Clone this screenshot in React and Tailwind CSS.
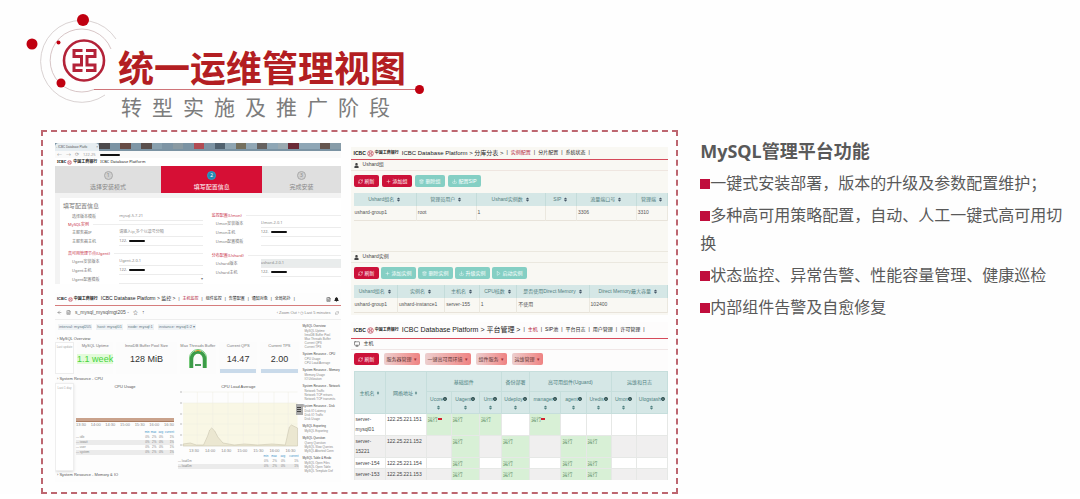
import React from "react";
import {
  LuRefreshCw,
  LuPlus,
  LuTrash2,
  LuDownload,
  LuPlay,
  LuArrowLeft,
  LuFileText,
  LuMonitor,
} from "react-icons/lu";
import { FaUser, FaSort, FaInfoCircle, FaBell } from "react-icons/fa";

const cjk = "font-['Noto_Sans','Noto_Sans_CJK_SC',sans-serif]";
const narrow = "font-['Liberation_Sans','Noto_Sans_CJK_SC',sans-serif]";

function BankMark({ className }) {
  return (
    <svg viewBox="0 0 150 150" className={className} fill="none" stroke="currentColor" aria-hidden="true">
      <circle cx="75" cy="75" r="61" strokeWidth="12" />
      <path strokeWidth="10" d="M70 42H42V61H66V87H42V106H70M80 42H108V61H84V87H108V106H80" />
    </svg>
  );
}

function Orbit() {
  return (
    <svg viewBox="0 0 118 118" className="h-[118px] w-[118px] shrink-0 text-[#b32238]" fill="none" aria-hidden="true">
      <path d="M116 39A41 41 0 1 0 105 95" stroke="#cfc6c6" strokeWidth=".8" />
      <path d="M111 49A31.500 31.500 0 1 0 94 89.500" stroke="#cdb6b8" strokeWidth=".8" />
      <path d="M94 89.500H118" stroke="#cf7479" />
      <g fill="#c00010">
        <circle cx="83" cy="20" r="6" />
        <circle cx="32" cy="44" r="5.500" />
        <circle cx="58.500" cy="42.500" r="2" />
        <circle cx="61" cy="83" r="4.500" />
      </g>
      <g stroke="currentColor">
        <circle cx="84" cy="60.500" r="20" strokeWidth="2.600" />
        <path
          strokeWidth="3"
          d="M82.500 50.500H74V56.500H81.500V65H74V70.500H82.500M86 50.500H95V56.500H87V65H95V70.500H86"
        />
      </g>
    </svg>
  );
}

function Brand({ small, titleClass, crumb, links }) {
  return (
    <div className="flex items-center gap-[3px] whitespace-nowrap text-[#222]">
      <div className="flex shrink-0 items-center gap-px text-[4px] leading-[8px] font-bold">
        <span className={small ? "text-[4px]" : "text-[5px]"}>ICBC</span>
        <BankMark className={`${small ? "size-[5px]" : "size-[7px]"} text-[#b32238]`} />
        <span>中国工商银行</span>
      </div>
      <span className={titleClass}>ICBC Database Platform{crumb ? ` > ${crumb} >` : ""}</span>
      {links && (
        <nav className={`flex gap-[3px] ${small ? "text-[4px]" : "text-[5px]"}`}>
          <span>|</span>
          {links.map((l, i) => (
            <React.Fragment key={l}>
              <a href="#" className={i === 0 ? "text-[#b32238]" : ""}>{l}</a>
              <span>|</span>
            </React.Fragment>
          ))}
        </nav>
      )}
    </div>
  );
}

function Field({ label, value, bar, grey, select }) {
  return (
    <label className="flex h-[9px] items-center text-[4px] text-[#777]">
      <span className="w-[38%] shrink-0 pl-1">{label}</span>
      <span className={`flex h-[9px] min-w-0 flex-1 items-center border-b border-[#ececec] ${grey ? "bg-[#e9ecec]" : ""}`}>
        {select ? (
          <>
            <select className="w-full appearance-none text-[4px]" defaultValue=""><option value="" /></select>
            <span>▾</span>
          </>
        ) : (
          <input className={bar ? "w-[10px] text-[4px]" : "w-full min-w-0 text-[4px] text-[#888]"} defaultValue={value} />
        )}
        {bar && <span className="h-[2px] w-4 shrink-0 rounded-full bg-[#111]" />}
      </span>
    </label>
  );
}

function Legend({ children }) {
  return (
    <div className="flex h-[7px] items-center gap-1 text-[4px] text-[#c8324a]">
      {children}
      <span className="h-px flex-1 bg-[#eeeeee]" />
    </div>
  );
}

function Step({ n, label, active }) {
  return (
    <li className={`relative flex flex-col items-center gap-[3px] pt-[5px] text-[6px] leading-[8px] ${active ? "bg-[#d60f35] text-white" : "bg-[#dfdfdf] text-[#888]"}`}>
      <span className={`flex size-[9px] items-center justify-center rounded-full border text-[5px] leading-none ${active ? "border-[#2b9fc4] bg-[#2389b0]" : "border-[#aaa] bg-[#d0d0d0]"}`}>{n}</span>
      {label}
      {active && <span className="absolute top-[10px] -right-[5px] border-y-[5px] border-l-[5px] border-y-transparent border-l-[#d60f35]" />}
    </li>
  );
}

const patches = ["bg-[#4d4a4c]", "bg-[#7b93a3]", "bg-[#674c46]", "bg-[#7e96a6]", "bg-[#5a4f4c]", "bg-[#88a0ae]", "bg-[#7d94a4]", "bg-[#8a9aa2]", "bg-[#7b93a3]", "bg-[#b14b53]", "bg-[#7d94a4]", "bg-[#51626f]", "bg-[#8fa5b2]", "bg-[#75705e]", "bg-[#91a7b5]", "bg-[#65615f]", "bg-[#8ea6b5]", "bg-[#9aa9b0]", "bg-[#6a2a36]", "bg-[#8ea6b5]", "bg-[#8ea6b5]", "bg-[#65564f]", "bg-[#879ca8]"];

function InstallPanel() {
  return (
    <section className={`h-[141px] overflow-hidden bg-[#f3f3f3] ${cjk}`}>
      <div className="flex h-2 bg-[#7b93a3]">
        <span className="flex w-11 shrink-0 items-center justify-between rounded-t-sm bg-[#e6edf1] px-px font-['Liberation_Sans'] text-[3px] leading-[8px] whitespace-nowrap text-[#555]">
          <span>▫ ICBC Database Platfo</span><span>×</span>
        </span>
        {patches.map((c, i) => (
          <span key={i} className={`h-[6px] flex-1 ${c}`} />
        ))}
      </div>
      <div className="flex h-[7px] items-center gap-1 bg-[#fafafa] px-[2px] text-[5px] leading-[7px] text-[#999]">
        <span>←</span><span>→</span><span>⟳</span><span className="text-[4px]">122.25</span>
        <span className="h-[2px] w-5 rounded-full bg-[#111]" />
      </div>
      <div className="h-2 bg-white px-[2px]"><Brand small titleClass="text-[4px] leading-[8px]" /></div>
      <ol className="grid h-[27px] grid-cols-[106fr_101fr_78fr]">
        <Step n="1" label="选择安装模式" />
        <Step n="2" label="填写配置信息" active />
        <Step n="3" label="完成安装" />
      </ol>
      <div className="mt-[5px] ml-[5px] h-full bg-white pt-1 pl-[3px]">
        <h3 className="text-[6px] leading-[8px] text-[#777]">填写配置信息</h3>
        <div className="grid grid-cols-[139fr_128fr] gap-x-[9px] pt-[2px]">
          <div className="pl-[5px]">
            <Field label="选择版本模板" value="mysql-5.7.21" />
            <Legend>MySQL实例</Legend>
            <Field label="主服务器IP" value="请输入ip,多个以逗号分隔" />
            <Field label="主服务器主机" value="122." bar />
            <div className="mt-1"><Legend>高可用管理节点(Ugent)</Legend></div>
            <Field label="Ugent安装版本" value="Ugent-2.0.1" />
            <Field label="Ugent主机" value="122." bar />
            <Field label="Ugent配置模板" select />
          </div>
          <div>
            <Legend>监控配置(Umon)</Legend>
            <Field label="Umon安装版本" value="Umon-2.0.1" />
            <Field label="Umon主机" value="122." bar />
            <Field label="Umon配置模板" value="" />
            <div className="mt-[6px]"><Legend>分布配置(Ushard)</Legend></div>
            <Field label="Ushard版本" value="ushard-2.0.1" grey />
            <Field label="Ushard主机" value="122." bar />
            <Field label="" value="" />
          </div>
        </div>
      </div>
    </section>
  );
}

const sidebar = [
  ["MySQL Overview", "MySQL Uptime", "InnoDB Buffer Pool", "Max Threads Buffer", "Current QPS", "Current TPS"],
  ["System Resource - CPU", "CPU Usage", "CPU Load Average"],
  ["System Resource - Memory", "Memory Usage", "IO Utilization"],
  ["System Resource - Network", "Network Traffic", "Network TCP retrans", "Network TCP transmits"],
  ["System Resource - Disk", "Disk IO Latency", "Disk IO Traffic", "Disk Usage"],
  ["MySQL Exporting", "MySQL Exporting"],
  ["MySQL Question", "Query Question", "MySQL Slow Queries", "MySQL Aborted Conn"],
  ["MySQL Table & Redo", "MySQL Open Files", "MySQL Open Table", "MySQL Template Def"],
];

function Stat({ title, value, green, spark, grow }) {
  return (
    <div className={`flex min-w-0 flex-col items-center bg-[#fcfcfc] whitespace-nowrap ${grow}`}>
      <span className="text-[4px] leading-[7px] text-[#777]">{title}</span>
      <span className={`my-[5px] text-[9px] leading-[10px] ${green ? "bg-[#e2fbd9] text-[8px] text-[#46d43c]" : "text-[#333]"}`}>{value}</span>
      {spark && <span className="mb-px h-[5px] w-[95%] bg-[#c9daea]" />}
    </div>
  );
}

function MiniRows({ rows }) {
  return (
    <table className="w-full table-fixed text-right text-[3px] leading-[5px] whitespace-nowrap text-[#888]">
      <thead>
        <tr className="text-[#3a92c8]">
          <th className="w-[68%]" /><th className="font-normal">min</th><th className="font-normal">max</th><th className="font-normal">avg</th><th className="w-[11%] font-normal">current</th>
        </tr>
      </thead>
      <tbody>
        {rows.map((r, i) => (
          <tr key={r} className={i % 2 ? "bg-[#ebebeb]" : ""}>
            <td className="text-left">— {r}</td><td>0%</td><td>2%</td><td>0%</td><td>1%</td>
          </tr>
        ))}
      </tbody>
    </table>
  );
}

const times = ["13:30", "14:00", "14:30", "15:00", "15:30", "16:00", "16:30"];

function MonitorPanel() {
  return (
    <section className={`h-[189px] overflow-hidden bg-[#fdfdfd] text-[#555] ${narrow}`}>
      <div className="flex h-[13px] items-center justify-between border-b border-[#d67d7d] px-[2px]">
        <Brand small titleClass="text-[5px]" crumb="监控" links={["主机监控", "组件监控", "告警配置", "通知对象", "全局拓扑"]} />
        <span className="flex gap-[3px] text-[5px] text-[#222]"><LuFileText /><FaBell /></span>
      </div>
      <div className="flex h-[14px] items-center justify-between border-b border-[#eeeeee] px-[2px] text-[5px]">
        <span className="flex items-center gap-1"><LuArrowLeft /><LuFileText />s_mysql_mysqlmgt205 -<span>☆</span><span>↑</span></span>
        <span className="flex items-center gap-1 text-[4px] text-[#888]">‹ Zoom Out › ◷ Last 5 minutes <LuRefreshCw /></span>
      </div>
      <div className="flex">
        <div className="min-w-0 flex-1">
          <div className="flex gap-1 px-[3px] pt-1 text-[4px] leading-[6px]">
            {["interval:  mysql205", "host:  mysql01", "node:  mysql:1", "instance:  mysql1:2 ▾"].map((t) => (
              <button key={t} type="button" className="bg-[#eef2f5] px-px text-[#677a88]">{t}</button>
            ))}
          </div>
          <div className="pt-[6px] pl-[2px] text-[4px] leading-[6px]">› MySQL Overview</div>
          <div className="flex h-8 gap-[3px]">
            <div className="w-[19px] shrink-0 border border-[#eeeeee] bg-white text-center text-[3px] leading-[8px] whitespace-nowrap text-[#aaa]">Last update</div>
            <Stat title="MySQL Uptime" value="1.1 week" green grow="flex-[36]" />
            <Stat title="InnoDB Buffer Pool Size" value="128 MiB" grow="flex-[60]" />
            <div className="flex flex-[36] flex-col items-center bg-[#fcfcfc] text-[4px] leading-[7px] whitespace-nowrap text-[#777]">
              Max Threads Buffer
              <svg viewBox="0 0 18 20" className="h-5 w-[18px]" fill="none" aria-hidden="true">
                <path d="M2.500 19V10A6.500 7 0 0 1 15.500 10V19" stroke="#3c9c48" strokeWidth="3.500" />
                <path d="M.5 19V9A8.500 8.500 0 0 1 17.500 9V19" stroke="#74c878" strokeWidth="1" />
                <path d="M6 2.500Q9 0 12 2.500" stroke="#e59b35" />
                <path d="M6 16H12" stroke="#4d9d5c" strokeWidth="2" />
              </svg>
            </div>
            <Stat title="Current QPS" value="14.47" spark grow="flex-[38]" />
            <Stat title="Current TPS" value="2.00" spark grow="flex-[38]" />
          </div>
          <div className="py-px pl-[2px] text-[4px] leading-[7px]">› System Resource - CPU</div>
          <div className="flex gap-[2px]">
            <div className="h-[88px] w-[19px] shrink-0 border border-[#eeeeee] bg-white text-center text-[3px] leading-[8px] whitespace-nowrap text-[#aaa] shadow-sm">Last 1 day</div>
            <div className="w-[98px] shrink-0 text-[4px]">
              <div className="h-[35px] text-center leading-[8px]">CPU Usage</div>
              <div className="h-1 border-b border-[#a97b60] bg-[#c9a28c]" />
              <div className="flex justify-between pb-[2px] leading-[6px] text-[#888]">
                {times.map((t) => <span key={t}>{t}</span>)}
              </div>
              <MiniRows rows={["idle", "iowait", "user", "system"]} />
            </div>
            <div className="ml-[2px] min-w-0 flex-1 text-[4px]">
              <div className="text-center leading-[8px]">CPU Load Average</div>
              <svg viewBox="0 0 118 57" preserveAspectRatio="none" className="h-[57px] w-full" aria-hidden="true">
                <rect x="5" y="12" width="112" height="43" fill="#f9f7e5" />
                <path d="M5 1H117M5 12H117M5 23H117M5 33H117M5 44H117M19 1V55M34 1V55M49 1V55M64 1V55M79 1V55M94 1V55M108 1V55" stroke="#f2f0e6" strokeWidth=".5" />
                <path d="M5 53L12 52L18 54H25L29 45L31 39L33 37L36 40L39 46L44 52L55 54L65 53L78 54L92 53L105 54L109 36L111 34L117 37V55H5Z" fill="#ebe7d1" stroke="#cbc7b2" strokeWidth=".6" />
                <path d="M2 1H4M2 12H4M2 23H4M2 33H4M2 44H4M2 54H4" stroke="#bbb" />
              </svg>
              <div className="flex justify-around pl-2 leading-[6px] text-[#888]">
                {times.map((t) => <span key={t}>{t}</span>)}
              </div>
              <MiniRows rows={["load1m", "load5m"]} />
            </div>
          </div>
          <div className="pt-px pl-[2px] text-[4px] leading-[6px]">› System Resource - Memory &amp; IO</div>
        </div>
        <aside className="relative w-[42px] shrink-0 pt-1 pl-1 text-[3px] leading-[4px] whitespace-nowrap">
          {sidebar.map(([head, ...items]) => (
            <div key={head} className="mb-[3px]">
              <div className="leading-[5px] text-[#444]">{head}</div>
              {items.map((t, i) => <div key={i} className="pl-[2px] text-[#888]">{t}</div>)}
            </div>
          ))}
          <span className="absolute top-[84px] left-[-3px] flex h-[11px] w-[7px] flex-col items-center justify-center gap-px bg-[#aaa]">
            <i className="h-px w-1 bg-[#444]" /><i className="h-px w-1 bg-[#444]" /><i className="h-px w-1 bg-[#444]" />
          </span>
        </aside>
      </div>
    </section>
  );
}

const tones = {
  red: "bg-[#cc1239] text-white",
  teal: "bg-[#85cfc4] text-white",
  pink: "bg-linear-to-r from-[#eccfcf] to-[#ee8282] text-[#5b3434]",
};

function Action({ tone, icon: Icon, label }) {
  return (
    <button type="button" className={`flex h-3 items-center gap-[2px] rounded-xs text-[5px] leading-none whitespace-nowrap ${tone === "pink" ? "px-[3px]" : "px-1"} ${tones[tone]}`}>
      {Icon && <Icon className="size-[5px]" />}
      {label}
      {tone === "pink" && <span className="text-[#9c2c35]">▾</span>}
    </button>
  );
}

function Grid({ widths, head, row }) {
  return (
    <table className="w-full table-fixed border-b border-[#e8e3da] text-[5px] text-[#555]">
      <colgroup>{widths.map((w, i) => <col key={i} style={{ width: `${w}%` }} />)}</colgroup>
      <thead className="bg-[#d5e7e6] text-[#547f7f]">
        <tr>
          {head.map((h) => (
            <th key={h} className="h-[13px] border-r border-[#c4dcda] p-0 text-[5px] leading-none font-normal whitespace-nowrap">
              <span className="inline-flex items-center gap-[2px]">{h}<FaSort className="size-[5px] text-[#456]" /></span>
            </th>
          ))}
        </tr>
      </thead>
      <tbody>
        <tr>
          {row.map((c, i) => (
            <td key={i} className="h-[14px] border-r border-[#ebe8df] px-px py-0 leading-none whitespace-nowrap">{c}</td>
          ))}
        </tr>
      </tbody>
    </table>
  );
}

function ShardPanel() {
  return (
    <section className={`h-[168px] overflow-hidden bg-[#f9f8f3] ${narrow}`}>
      <div className="flex h-[13px] items-center border-b border-[#d54a5a] px-[3px]">
        <Brand titleClass="text-[6px]" crumb="分库分表" links={["实例配置", "分片配置", "系统状态"]} />
      </div>
      <div className="flex h-[11px] items-center gap-1 border-b border-[#efe6e0] px-[3px] text-[5px] text-[#444]"><FaUser />Ushard组</div>
      <div className="flex gap-[3px] px-[3px] py-1">
        <Action tone="red" icon={LuRefreshCw} label="刷新" />
        <Action tone="red" icon={LuPlus} label="添加组" />
        <Action tone="teal" icon={LuTrash2} label="删除组" />
        <Action tone="teal" icon={LuDownload} label="配置SIP" />
      </div>
      <div className="h-[60px] pt-[2px] pl-[3px]">
        <Grid
          widths={[20, 19, 22, 10, 19, 10]}
          head={["Ushard组名", "管理员用户", "Ushard实例数", "SIP", "流量端口号", "管理端"]}
          row={["ushard-group1", "root", "1", "", "3306", "3310"]}
        />
      </div>
      <div className="flex h-3 items-center gap-1 border-y border-[#ebe8df] px-[3px] text-[5px] text-[#444]"><FaUser />Ushard实例</div>
      <div className="flex gap-[2px] px-[3px] py-1">
        <Action tone="red" icon={LuRefreshCw} label="刷新" />
        <Action tone="teal" icon={LuPlus} label="添加实例" />
        <Action tone="teal" icon={LuTrash2} label="删除实例" />
        <Action tone="teal" icon={LuDownload} label="升级实例" />
        <Action tone="teal" icon={LuPlay} label="启动实例" />
      </div>
      <div className="pt-[2px] pl-[3px]">
        <Grid
          widths={[14, 15, 11, 12, 23, 25]}
          head={["Ushard组名", "实例名", "主机名", "CPU核数", "是否使用Direct Memory", "Direct Memory最大容量"]}
          row={["ushard-group1", "ushard-instance1", "server-155", "1", "不使用", "102400"]}
        />
      </div>
    </section>
  );
}

const cols = ["Ucore", "Uagent", "Urm", "Udeploy", "manager", "agent", "Uredis", "Umon", "Ulogstash"];
const hosts = [
  { name: "server-mysql01", ip: "122.25.221.151", on: [0, 1, 2, 4], flag: [0, 4], h: "h-[22px]" },
  { name: "server-15221", ip: "122.25.221.152", on: [1, 3, 5, 6], h: "h-[22px]" },
  { name: "server-154", ip: "122.25.221.154", on: [1, 3, 5, 6], h: "h-[11px]" },
  { name: "server-153", ip: "122.25.221.153", on: [1, 3, 5, 6], h: "h-[12px]" },
];
const hostWidths = [10, 13, 8, 9, 7, 9, 10, 8, 8, 8, 10];

function HostPanel() {
  const th = "border border-[#c6dedc] p-0 text-center font-normal whitespace-nowrap";
  const td = "border border-[#e6e8e6] px-px py-0 align-top leading-[10px]";
  return (
    <section className={`h-[158px] overflow-hidden bg-[#fdfcfc] ${narrow}`}>
      <div className="flex h-[17px] items-center border-b border-[#d54a5a] px-[3px]">
        <Brand titleClass="text-[7px]" crumb="平台管理" links={["主机", "SIP池", "平台日志", "用户管理", "许可管理"]} />
      </div>
      <div className="flex h-[11px] items-center gap-1 border-b border-[#f0e6e6] px-[3px] text-[5px] text-[#333]"><LuMonitor className="size-[6px]" />主机</div>
      <div className="flex gap-[5px] px-[3px] pt-[3px] pb-[5px]">
        <Action tone="red" icon={LuRefreshCw} label="刷新" />
        <Action tone="pink" label="服务器管理" />
        <Action tone="pink" label="一键高可用环境" />
        <Action tone="pink" label="组件服务" />
        <Action tone="pink" label="运维管理" />
      </div>
      <div className="pt-px pl-[3px]">
        <table className="w-full table-fixed border-collapse text-[5px] leading-[6px] text-[#444]">
          <colgroup>{hostWidths.map((w, i) => <col key={i} style={{ width: `${w}%` }} />)}</colgroup>
          <thead className="bg-[#d5e7e6] text-[#4d7f7f]">
            <tr className="h-[20px]">
              <th rowSpan="2" className={th}>主机名 <FaSort className="inline size-[4px]" /></th>
              <th rowSpan="2" className={th}>网络地址 <FaSort className="inline size-[4px]" /></th>
              <th colSpan="3" className={th}>基础组件</th>
              <th className={th}>备份部署</th>
              <th colSpan="3" className={th}>高可用组件(Uguard)</th>
              <th colSpan="2" className={th}>运维和日志</th>
            </tr>
            <tr className="h-[22px]">
              {cols.map((c) => (
                <th key={c} className={th}>
                  <span className="flex items-center justify-center">{c}<FaInfoCircle className="size-[4px] shrink-0 text-[#244]" /></span>
                  <FaSort className="mx-auto mt-[3px] size-[5px]" />
                </th>
              ))}
            </tr>
          </thead>
          <tbody>
            {hosts.map((r, i) => (
              <tr key={r.name} className={`${r.h} ${i % 2 ? "bg-[#f0efef]" : "bg-white"}`}>
                <td className={td}>{r.name}</td>
                <td className={`${td} whitespace-nowrap`}>{r.ip}</td>
                {cols.map((c, j) => (
                  <td key={c} className={`${td} whitespace-nowrap ${r.on.includes(j) ? "bg-[#d8f0d6] text-[#5b8b62]" : ""}`}>
                    {r.on.includes(j) ? "运行" : ""}
                    {r.flag?.includes(j) && <span className="mb-px inline-block h-[2px] w-1 bg-[#d3202c]" />}
                  </td>
                ))}
              </tr>
            ))}
          </tbody>
        </table>
      </div>
    </section>
  );
}

const features = [
  "一键式安装部署，版本的升级及参数配置维护；",
  "多种高可用策略配置，自动、人工一键式高可用切换",
  "状态监控、异常告警、性能容量管理、健康巡检",
  "内部组件告警及自愈修复",
];

export default function App() {
  return (
    <div lang="zh-CN" className={`bg-[#fefefe] ${cjk}`}>
      <header className="flex h-[130px] items-start">
        <Orbit />
        <div>
          <div className="relative h-[90px] border-b border-[#cf7479] pt-[47px] pr-[14px]">
            <h1 className="text-4xl leading-[44px] font-bold whitespace-nowrap text-[#b31e22]">统一运维管理视图</h1>
            <span className="absolute right-[-4px] bottom-[-5px] size-[9px] rounded-full bg-[#c00010]" />
          </div>
          <p className="flex gap-[10px] pt-[4px] pl-[3px] text-[21px] leading-[26px] text-[#7c7c7c]">
            {[..."转型实施及推广阶段"].map((c) => <span key={c}>{c}</span>)}
          </p>
        </div>
      </header>
      <main className="flex items-start gap-[22px] pr-2 pl-[41px]">
        <div className="flex w-[61.8%] gap-[10px] border-2 border-dashed border-[#bd6670] pt-[11px] pr-2 pb-[10px] pl-3">
          <div className="flex min-w-0 flex-[285] flex-col gap-[9px]">
            <InstallPanel />
            <MonitorPanel />
          </div>
          <div className="flex min-w-0 flex-[317] flex-col gap-[7px] pt-1">
            <ShardPanel />
            <HostPanel />
          </div>
        </div>
        <aside className="min-w-0 flex-1 pt-[7px] text-[#595959]">
          <h2 className="text-lg leading-7 font-bold">MySQL管理平台功能</h2>
          <ul className="space-y-1 pt-1 text-base leading-7">
            {features.map((f) => (
              <li key={f}><span className="inline-block size-[10px] bg-[#c00d3c]" />{f}</li>
            ))}
          </ul>
        </aside>
      </main>
    </div>
  );
}
